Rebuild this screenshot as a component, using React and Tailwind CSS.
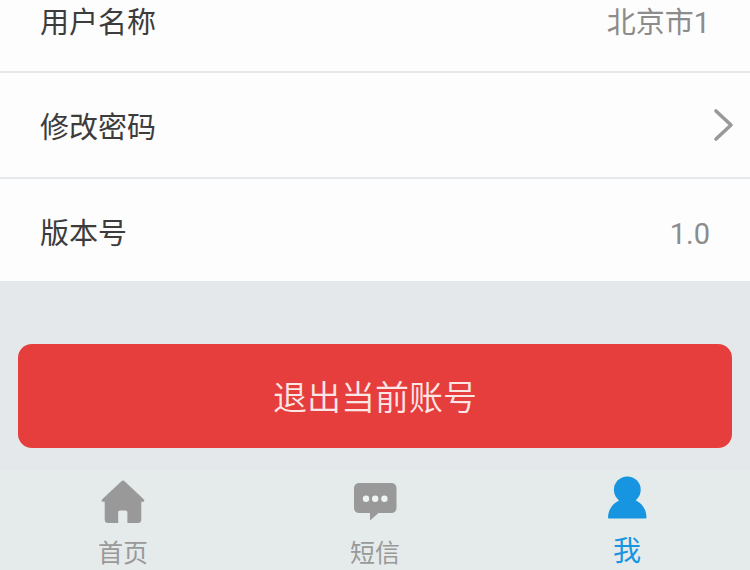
import { useState } from 'react'

const HomeIcon = () => (
  <svg className="h-11 w-11" viewBox="0 0 44 44" fill="currentColor" aria-hidden="true">
    <path d="M20.4 1.2Q22 -.2 23.6 1.2L43 19.6Q43.8 21.6 42.4 21.8H40.3V39.5Q40.3 43 36.8 43H26.4V32.2Q26.4 30.4 24.6 30.4H19Q17.2 30.4 17.2 32.2V43H7.2Q3.7 43 3.7 39.5V21.8H1.6Q.2 21.6 1 19.6Z" />
  </svg>
)

const MessageIcon = () => (
  <svg className="h-11 w-11" viewBox="0 0 44 44" aria-hidden="true">
    <path
      fill="currentColor"
      d="M6.5 3H38Q43.5 3 43.5 8.5V27.5Q43.5 33 38 33H25.5L17 40.5V33H6.5Q1 33 1 27.5V8.5Q1 3 6.5 3Z"
    />
    <g className="fill-[#eef3f3]">
      <circle cx="13" cy="18.7" r="3.2" />
      <circle cx="22.2" cy="18.7" r="3.2" />
      <circle cx="31.4" cy="18.7" r="3.2" />
    </g>
  </svg>
)

const UserIcon = () => (
  <svg className="h-11 w-11" viewBox="0 0 44 44" fill="currentColor" aria-hidden="true">
    <circle cx="22.3" cy="13.8" r="13.4" />
    <path d="M14 24.5L17 20H28L31 24.5C37 27.5 41.3 33 41.5 41.5Q41.5 42.5 40.500 42.5H4Q3 42.5 3 41.5C3.3 33 8 27.500 14 24.500Z" />
  </svg>
)

const tabs = [
  { key: 'home', label: '首页', icon: HomeIcon },
  { key: 'sms', label: '短信', icon: MessageIcon },
  { key: 'me', label: '我', icon: UserIcon }
]

const App = () => {
  const [active, setActive] = useState('me')

  return (
    <div className="flex min-h-screen w-full flex-col bg-[#e4e8eb] font-['Noto_Sans_CJK_SC',sans-serif]">
      {/* Account settings */}
      <dl className="bg-[#fdfdfd] text-[29px] leading-10 text-[#3c3c3c]">
        <div className="flex items-baseline justify-between border-b-2 border-[#e6e9eb] px-10 pb-[31px]">
          <dt>用户名称</dt>
          <dd className="font-['Roboto','Noto_Sans_CJK_SC',sans-serif] leading-8 text-[#8c8c8c]">北京市1</dd>
        </div>
        <div className="border-b-2 border-[#e6e9eb]">
          <dt>
            <button type="button" className="flex w-full items-center justify-between py-8 pr-4 pl-10">
              修改密码
              <svg
                className="h-9 w-6 text-[#999]"
                viewBox="0 0 24 36"
                fill="none"
                stroke="currentColor"
                strokeWidth="3.6"
                strokeLinecap="round"
                strokeLinejoin="round"
                aria-hidden="true"
              >
                <path d="M6 4L21 18L6 32" />
              </svg>
            </button>
          </dt>
        </div>
        <div className="flex items-baseline justify-between px-10 pt-8 pb-[30px]">
          <dt>版本号</dt>
          <dd className="font-['Roboto','Noto_Sans_CJK_SC',sans-serif] leading-8 text-[#8c8c8c]">1.0</dd>
        </div>
      </dl>

      <div className="grow px-[18px] pt-[63px] pb-[22px]">
        <button
          type="button"
          className="w-full rounded-[14px] bg-[#e63d3d] py-[26px] text-[34px] leading-[52px] font-[350] text-[#fbe6e6]"
        >
          退出当前账号
        </button>
      </div>

      {/* Bottom tab bar */}
      <nav className="flex justify-between bg-[#e5ebeb] px-[98px] pt-[6px] pb-[3px]">
        {tabs.map(({ key, label, icon: Icon }) => (
          <button
            key={key}
            type="button"
            onClick={() => setActive(key)}
            className={`flex w-[50px] flex-col items-center justify-start gap-[11px]
              ${active === key
                ? 'text-[28px] leading-9 text-[#1795e0]'
                : 'pt-1 text-[25px] leading-8 text-[#999]'}`}
          >
            <Icon />
            {label}
          </button>
        ))}
      </nav>
    </div>
  )
}

export default App
